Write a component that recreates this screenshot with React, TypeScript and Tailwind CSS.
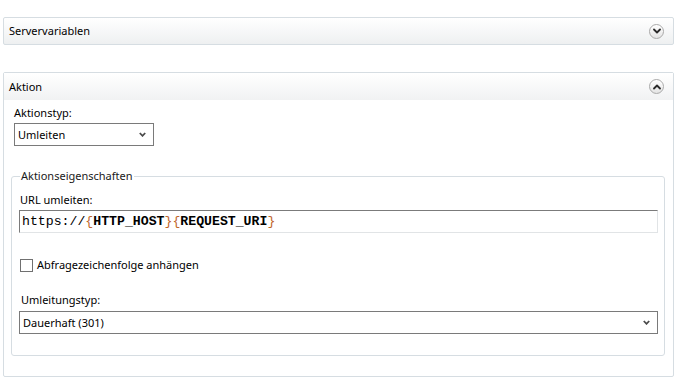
function CircleChevron({ up }: { up?: boolean }) {
  return (
    <span className="flex h-[15px] w-[15px] items-center justify-center rounded-full border border-[#a9a9a9] bg-gradient-to-b from-white to-[#e4e4e4] shadow-[inset_0_1px_0_#fff]">
      <svg width="8" height="6" viewBox="0 0 8 6" className={up ? "rotate-180" : ""}>
        <path d="M1 1.5 L4 4.5 L7 1.5" fill="none" stroke="#2b2b2b" strokeWidth="1.8" strokeLinecap="round" strokeLinejoin="round" />
      </svg>
    </span>
  );
}

function SmallChevron() {
  return (
    <svg width="7" height="5" viewBox="0 0 7 5">
      <path d="M0.8 1 L3.5 3.8 L6.2 1" fill="none" stroke="#4a4a4a" strokeWidth="1.8" />
    </svg>
  );
}

function FakeSelect({ value, className }: { value: string; className: string }) {
  return (
    <div className={`flex h-[23px] items-center justify-between border border-[#7a7a7a] bg-white pl-[3px] pr-[7px] ${className}`}>
      <span>{value}</span>
      <SmallChevron />
    </div>
  );
}

export default function App() {
  const brace = "text-[#c0662a]";
  return (
    <div
      className="h-[381px] w-[683px] overflow-hidden bg-white pt-[17px] text-[11px] leading-[16px] text-black"
      style={{ fontFamily: '"Noto Sans", "Segoe UI", sans-serif' }}
    >
      <div className="ml-[3px] flex h-[28px] w-[671px] items-center justify-between rounded-[2px] border border-[#d6dde2] bg-gradient-to-b from-white to-[#eef0f1] pl-[5px] pr-[9px]">
        <span>Servervariablen</span>
        <CircleChevron />
      </div>

      <div className="ml-[3px] mt-[27px] w-[671px] rounded-[2px] border border-[#d6dde2] bg-white">
        <div className="flex h-[27px] items-center justify-between bg-gradient-to-b from-white to-[#f1f2f3] pl-[5px] pr-[9px]">
          <span>Aktion</span>
          <CircleChevron up />
        </div>

        <div className="pb-[20px] pl-[7px] pr-[8px] pt-[5px]">
          <div className="ml-[3px]">Aktionstyp:</div>
          <FakeSelect value="Umleiten" className="ml-[3px] mt-[2px] w-[140px]" />

          <fieldset className="mt-[22px] rounded-[3px] border border-[#d6dde2] pb-[21px] pl-[7px] pr-[6px]">
            <legend className="ml-[1px] px-[1px] text-[#1a1a1a]">Aktionseigenschaften</legend>
            <div className="ml-[1px] mt-[8px]">URL umleiten:</div>
            <div
              className="mt-[2px] flex h-[23px] items-center border border-[#e1e4e6] border-l-[#7b7b7b] border-t-[#7b7b7b] pl-[2px] text-[13.2px]"
              style={{ fontFamily: '"Liberation Mono", "Courier New", monospace' }}
            >
              <span>https://</span>
              <span className={brace}>{"{"}</span>
              <span className="font-bold">HTTP_HOST</span>
              <span className={brace}>{"}"}</span>
              <span className={brace}>{"{"}</span>
              <span className="font-bold">REQUEST_URI</span>
              <span className={brace}>{"}"}</span>
            </div>

            <label className="mt-[24px] flex h-[16px] items-center">
              <span className="ml-[1px] h-[13px] w-[13px] border border-[#707070] bg-white" />
              <span className="ml-[4px]">Abfragezeichenfolge anhängen</span>
            </label>

            <div className="ml-[2px] mt-[19px]">Umleitungstyp:</div>
            <FakeSelect value="Dauerhaft (301)" className="mt-[3px] w-full" />
          </fieldset>
        </div>
      </div>
    </div>
  );
}
